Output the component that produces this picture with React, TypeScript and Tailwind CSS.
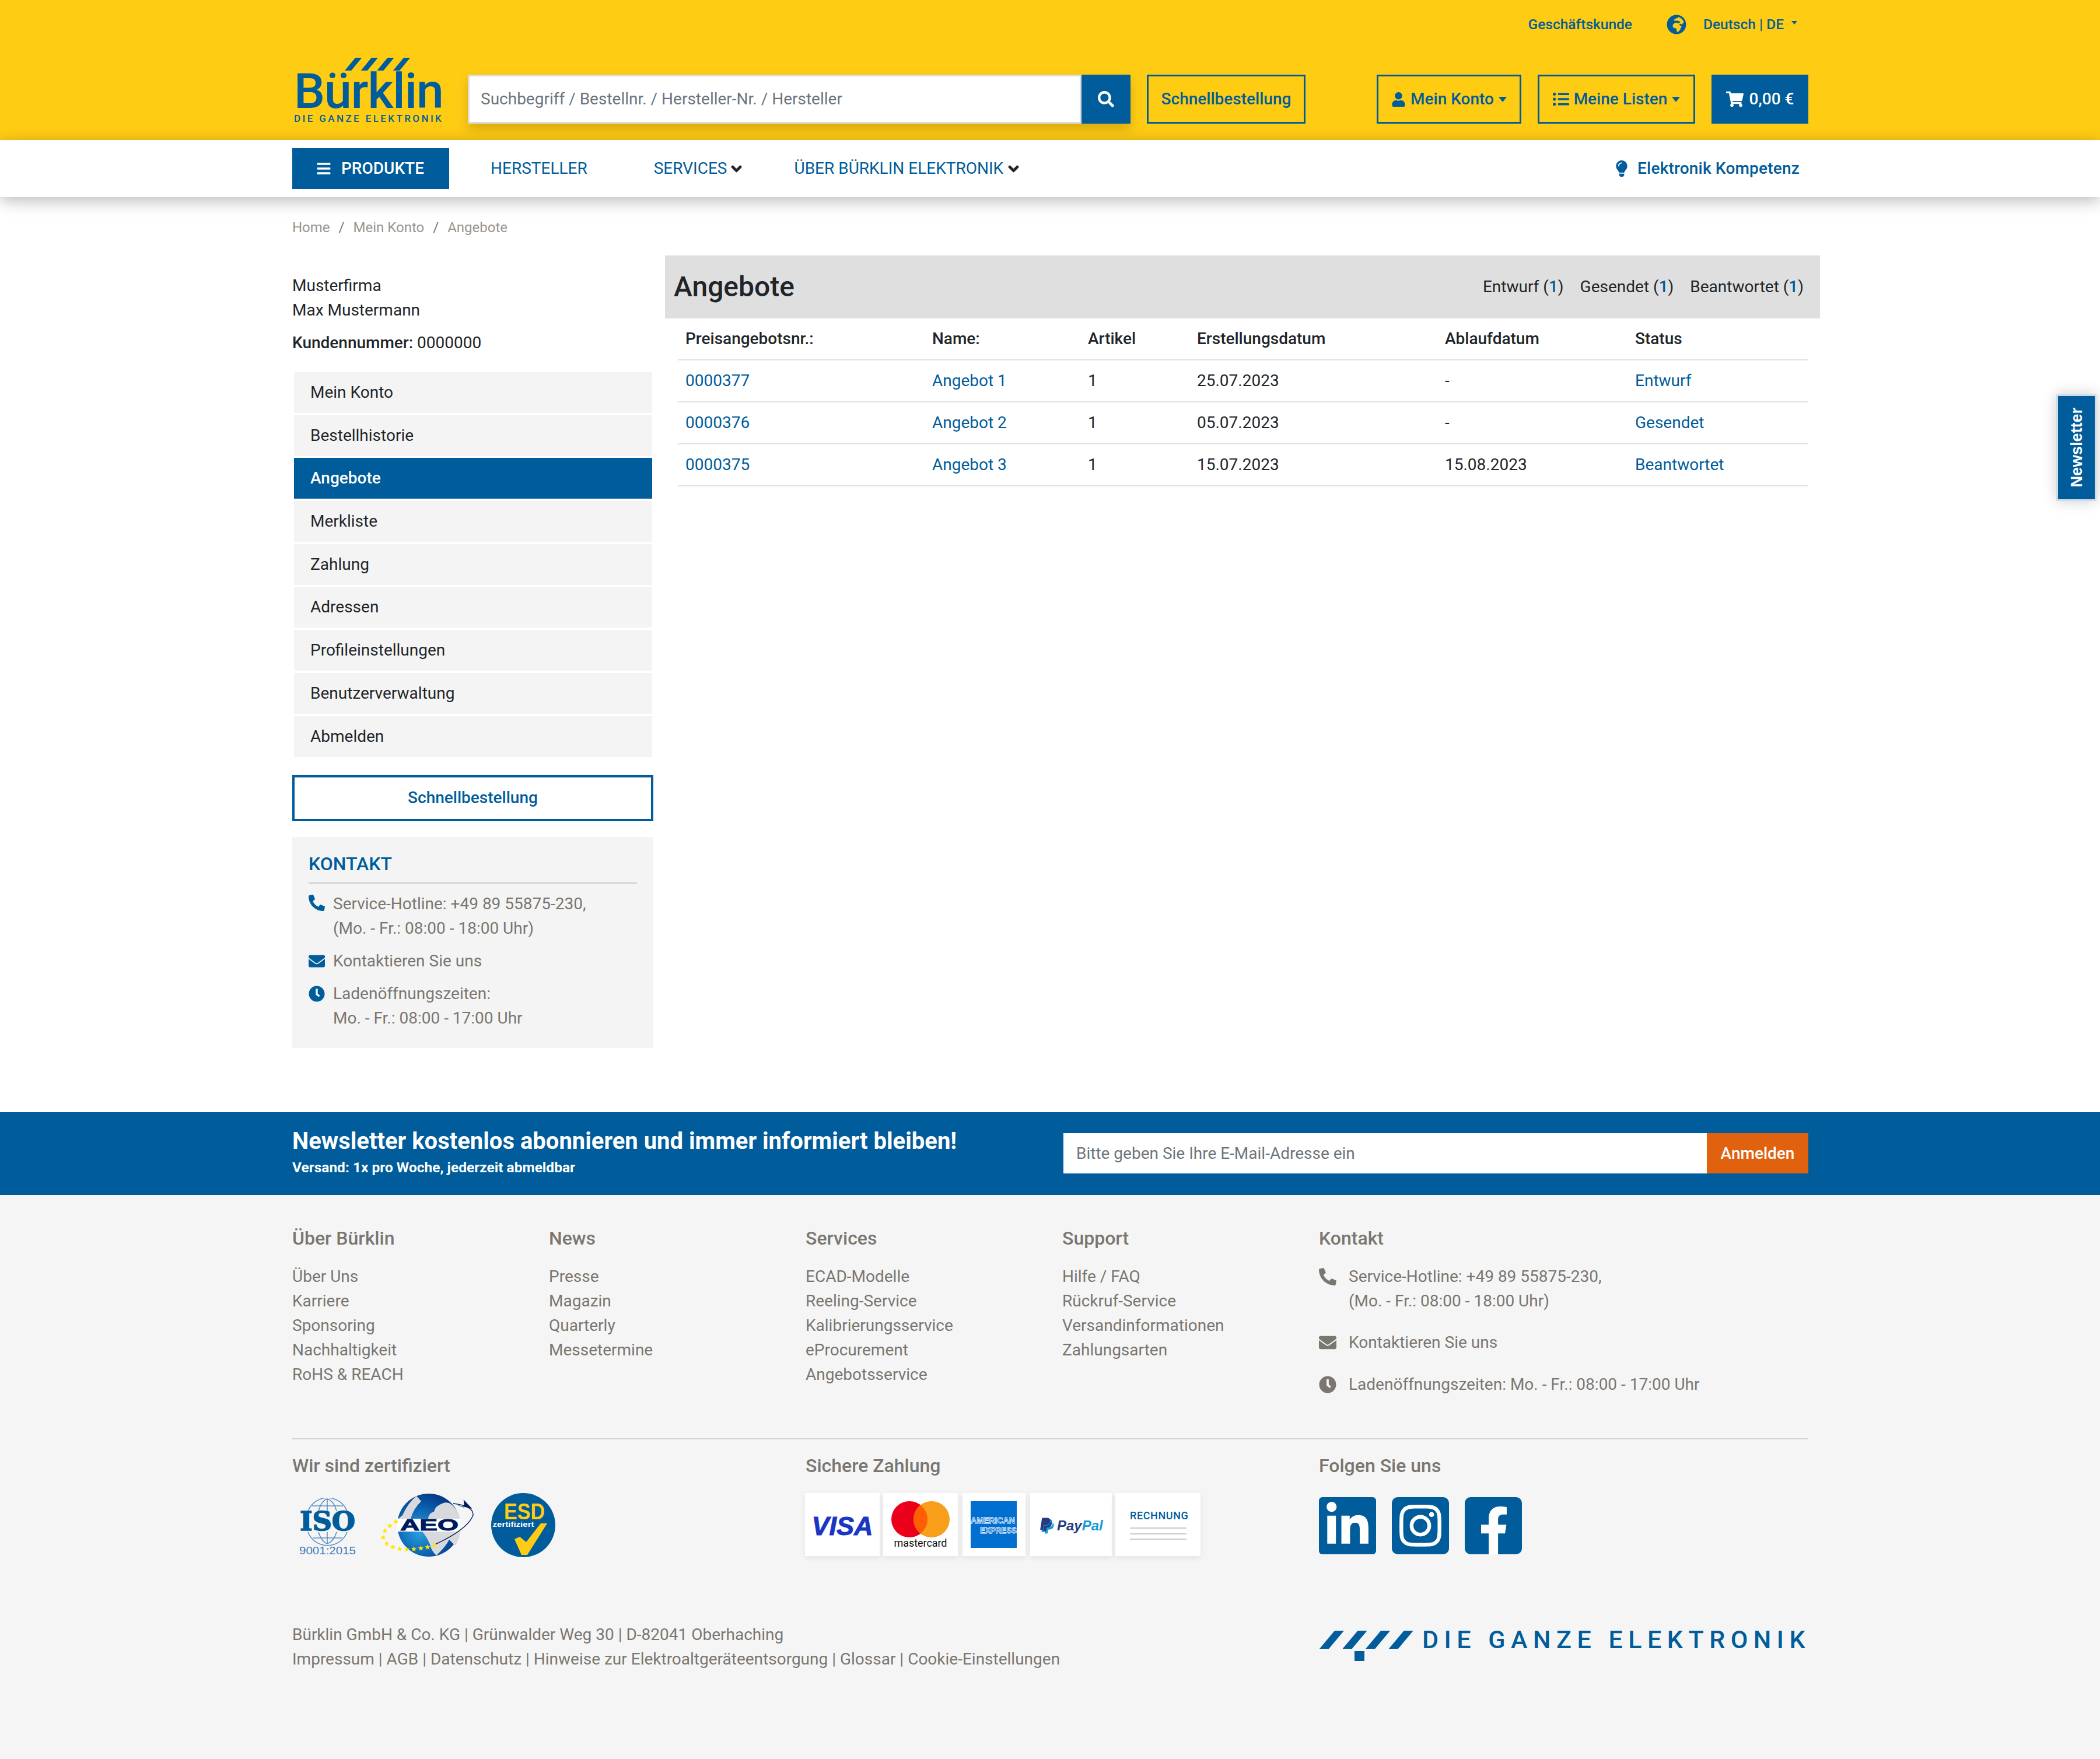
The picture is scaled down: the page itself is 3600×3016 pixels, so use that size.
import React from 'react';
import {
  FaBars,
  FaChevronDown,
  FaClock,
  FaEnvelope,
  FaFacebookF,
  FaGlobeAfrica,
  FaInstagram,
  FaLightbulb,
  FaLinkedinIn,
  FaListUl,
  FaPaypal,
  FaPhoneAlt,
  FaSearch,
  FaShoppingCart,
  FaUser,
} from 'react-icons/fa';

const Caret: React.FC = () => (
  <span className="inline-block w-0 h-0 border-x-[7px] border-x-transparent border-t-[9px] border-t-[#005c9a]" />
);

const Stripes: React.FC<{ className: string; big?: boolean }> = ({ className, big }) => (
  <svg viewBox="0 0 162 52" preserveAspectRatio="none" className={className} fill="#005c9a">
    {[0, 1, 2, 3].map((i) => {
      const x = i * 39.6;
      const h = big ? 31 : 52;
      return <polygon key={i} points={`${x + 26},0 ${x + 42},0 ${x + 16},${h} ${x},${h}`} />;
    })}
    {big && <rect x="60" y="35" width="17" height="17" />}
  </svg>
);

const Header: React.FC = () => (
  <header className="bg-[#ffcc14] h-[240px]">
    <div className="w-[2599px] ml-[501px]">
      <div className="h-[84px] flex items-center justify-end pr-[19px] text-[24.5px] font-medium text-[#005c9a]">
        <span>Geschäftskunde</span>
        <FaGlobeAfrica size={34} className="ml-[59px]" />
        <span className="ml-[29px]">Deutsch | DE</span>
        <span className="ml-[13px] mb-[6px] inline-block w-0 h-0 border-x-[5px] border-x-transparent border-t-[6px] border-t-[#005c9a]" />
      </div>
      <div className="mt-[44px] h-[84px] flex">
        <div className="w-[301px] -mt-[29px] pl-[3px] text-[#005c9a]">
          <Stripes className="ml-[87px] w-[113px] h-[22px]" />
          <div className="mt-[6px] h-[59px] leading-[59px] text-[84px] font-medium tracking-[-1px]">Bürklin</div>
          <div className="mt-[11px] leading-[13px] text-[17px] font-medium tracking-[3.4px] whitespace-nowrap">DIE GANZE ELEKTRONIK</div>
        </div>
        <div className="flex w-[1136px] shadow-[0_10px_18px_rgba(0,0,0,0.16)]">
          <input
            className="flex-1 bg-white border-[3px] border-[#dcdcdc] pl-[19px] text-[28px] outline-none placeholder:text-[#6c757d]"
            placeholder="Suchbegriff / Bestellnr. / Hersteller-Nr. / Hersteller"
          />
          <button className="w-[84px] bg-[#005c9a] flex items-center justify-center text-white">
            <FaSearch size={28} />
          </button>
        </div>
        <button className="ml-[28px] w-[272px] border-[3px] border-[#005c9a] text-[28px] font-medium text-[#005c9a]">
          Schnellbestellung
        </button>
        <button className="ml-[122px] w-[248px] border-[3px] border-[#005c9a] text-[28px] font-medium text-[#005c9a] flex items-center justify-center gap-[8px]">
          <FaUser size={25} />
          <span>Mein Konto</span>
          <Caret />
        </button>
        <button className="ml-[28px] w-[270px] border-[3px] border-[#005c9a] text-[28px] font-medium text-[#005c9a] flex items-center justify-center gap-[8px]">
          <FaListUl size={28} />
          <span>Meine Listen</span>
          <Caret />
        </button>
        <button className="ml-[28px] w-[166px] bg-[#005c9a] text-[28px] font-medium text-white flex items-center justify-center gap-[10px]">
          <FaShoppingCart size={30} />
          <span>0,00 €</span>
        </button>
      </div>
    </div>
  </header>
);

const Nav: React.FC = () => (
  <nav className="relative h-[98px] bg-white shadow-[0_6px_26px_rgba(0,0,0,0.28)]">
    <div className="w-[2599px] ml-[501px] h-full flex items-center text-[28px] text-[#005c9a]">
      <div className="w-[269px] h-[70px] bg-[#005c9a] text-white font-medium flex items-center pl-[41px] gap-[17px]">
        <FaBars size={26} />
        <span>PRODUKTE</span>
      </div>
      <span className="ml-[71px]">HERSTELLER</span>
      <span className="ml-[114px]">SERVICES</span>
      <FaChevronDown size={19} className="ml-[7px] text-[#212529] [stroke-width:50]" />
      <span className="ml-[89px]">ÜBER BÜRKLIN ELEKTRONIK</span>
      <FaChevronDown size={19} className="ml-[8px] text-[#212529] [stroke-width:50]" />
      <div className="ml-auto pr-[15px] flex items-center gap-[13px] font-medium tracking-[0.2px]">
        <FaLightbulb size={28} />
        <span>Elektronik Kompetenz</span>
      </div>
    </div>
  </nav>
);

const sideItems = [
  'Mein Konto',
  'Bestellhistorie',
  'Angebote',
  'Merkliste',
  'Zahlung',
  'Adressen',
  'Profileinstellungen',
  'Benutzerverwaltung',
  'Abmelden',
];

const Sidebar: React.FC = () => (
  <aside className="w-[619px] shrink-0 pt-[31px] text-[#212529]">
    <div>Musterfirma</div>
    <div>Max Mustermann</div>
    <div className="mt-[14px]">
      <span className="font-medium">Kundennummer:</span> 0000000
    </div>
    <div className="mt-[29px] ml-[3px] w-[614px] flex flex-col gap-[3.7px]">
      {sideItems.map((item) =>
        item === 'Angebote' ? (
          <div key={item} className="h-[70px] flex items-center pl-[28px] bg-[#005c9a] text-white font-medium">
            {item}
          </div>
        ) : (
          <div key={item} className="h-[70px] flex items-center pl-[28px] bg-[#f4f4f4]">
            {item}
          </div>
        ),
      )}
    </div>
    <button className="mt-[31px] w-full h-[79px] border-[4px] border-[#005c9a] font-medium text-[#005c9a]">
      Schnellbestellung
    </button>
    <div className="mt-[27px] h-[362px] bg-[#f4f4f4] px-[28px] pt-[25px] text-[#7a7670]">
      <div className="text-[32px] font-medium text-[#005c9a] border-b-2 border-[#cccccc] pb-[11px]">KONTAKT</div>
      <div className="mt-[14px] flex">
        <FaPhoneAlt size={28} className="mt-[5px] w-[42px] pr-[14px] text-[#005c9a] shrink-0" />
        <div>
          Service-Hotline: +49 89 55875-230,
          <br />
          (Mo. - Fr.: 08:00 - 18:00 Uhr)
        </div>
      </div>
      <div className="mt-[14px] flex items-center">
        <FaEnvelope size={28} className="w-[42px] pr-[14px] text-[#005c9a] shrink-0" />
        <div>Kontaktieren Sie uns</div>
      </div>
      <div className="mt-[14px] flex">
        <FaClock size={28} className="mt-[7px] w-[42px] pr-[14px] text-[#005c9a] shrink-0" />
        <div>
          Ladenöffnungszeiten:
          <br />
          Mo. - Fr.: 08:00 - 17:00 Uhr
        </div>
      </div>
    </div>
  </aside>
);

const offers = [
  { nr: '0000377', name: 'Angebot 1', created: '25.07.2023', expires: '-', status: 'Entwurf' },
  { nr: '0000376', name: 'Angebot 2', created: '05.07.2023', expires: '-', status: 'Gesendet' },
  { nr: '0000375', name: 'Angebot 3', created: '15.07.2023', expires: '15.08.2023', status: 'Beantwortet' },
];

const MainPanel: React.FC = () => (
  <section className="flex-1 min-w-0 -mr-[20px] text-[#212529]">
    <div className="h-[108px] bg-[#dfdfdf] flex items-center justify-between pl-[15px] pr-[28px]">
      <h1 className="text-[48px] font-medium">Angebote</h1>
      <div className="flex gap-[28px]">
        {['Entwurf', 'Gesendet', 'Beantwortet'].map((s) => (
          <span key={s}>
            {s} (<span className="font-medium text-[#005c9a]">1</span>)
          </span>
        ))}
      </div>
    </div>
    <table className="ml-[22px] w-[1938px] table-fixed border-separate border-spacing-0 text-left">
      <thead>
        <tr className="font-medium">
          <th className="w-[436px] h-[72px] pl-[13px] font-medium border-b-2 border-[#dee2e6]">Preisangebotsnr.:</th>
          <th className="w-[267px] font-medium border-b-2 border-[#dee2e6]">Name:</th>
          <th className="w-[187px] font-medium border-b-2 border-[#dee2e6]">Artikel</th>
          <th className="w-[425px] font-medium border-b-2 border-[#dee2e6]">Erstellungsdatum</th>
          <th className="w-[326px] font-medium border-b-2 border-[#dee2e6]">Ablaufdatum</th>
          <th className="font-medium border-b-2 border-[#dee2e6]">Status</th>
        </tr>
      </thead>
      <tbody>
        {offers.map((o) => (
          <tr key={o.nr}>
            <td className="h-[72px] pl-[13px] border-b-2 border-[#dee2e6] text-[#005c9a]">{o.nr}</td>
            <td className="border-b-2 border-[#dee2e6] text-[#005c9a]">{o.name}</td>
            <td className="border-b-2 border-[#dee2e6]">1</td>
            <td className="border-b-2 border-[#dee2e6]">{o.created}</td>
            <td className="border-b-2 border-[#dee2e6]">{o.expires}</td>
            <td className="border-b-2 border-[#dee2e6] text-[#005c9a]">{o.status}</td>
          </tr>
        ))}
      </tbody>
    </table>
  </section>
);

const NewsletterBand: React.FC = () => (
  <div className="bg-[#005c9a] h-[142px]">
    <div className="w-[2599px] ml-[501px] h-full flex justify-between text-white">
      <div className="pt-[26px]">
        <div className="text-[40px] leading-[48px] font-bold">Newsletter kostenlos abonnieren und immer informiert bleiben!</div>
        <div className="mt-[5px] text-[24.5px] leading-[32px] font-bold">Versand: 1x pro Woche, jederzeit abmeldbar</div>
      </div>
      <div className="flex self-center w-[1277px] h-[69px]">
        <input
          className="flex-1 bg-white pl-[22px] text-[28px] text-[#212529] outline-none placeholder:text-[#6c757d]"
          placeholder="Bitte geben Sie Ihre E-Mail-Adresse ein"
        />
        <button className="w-[174px] bg-[#e0610e] text-[28px] font-medium text-white">Anmelden</button>
      </div>
    </div>
  </div>
);

const footerCols = [
  { title: 'Über Bürklin', links: ['Über Uns', 'Karriere', 'Sponsoring', 'Nachhaltigkeit', 'RoHS & REACH'] },
  { title: 'News', links: ['Presse', 'Magazin', 'Quarterly', 'Messetermine'] },
  { title: 'Services', links: ['ECAD-Modelle', 'Reeling-Service', 'Kalibrierungsservice', 'eProcurement', 'Angebotsservice'] },
  { title: 'Support', links: ['Hilfe / FAQ', 'Rückruf-Service', 'Versandinformationen', 'Zahlungsarten'] },
];

const IsoLogo: React.FC = () => (
  <svg viewBox="0 0 97 101" className="w-[97px] h-[101px] mt-[9px] ml-[12px]">
    <g fill="none" stroke="#5b8fc0" strokeWidth="1.6">
      <path d="M15 22 A36 36 0 0 1 82 22" />
      <path d="M33 22 Q38 4 48 1 Q59 4 64 22" />
      <path d="M48 1 V22 M22 13 H75" />
      <path d="M15 58 A36 36 0 0 0 82 58" />
      <path d="M33 58 Q38 74 48 78 Q59 74 64 58" />
      <path d="M48 58 V78 M24 68 H73" />
    </g>
    <text x="48.5" y="55" textAnchor="middle" fontFamily="'DejaVu Serif', serif" fontWeight="900" fontSize="44" textLength="95" lengthAdjust="spacingAndGlyphs" fill="#005c9a" stroke="#005c9a" strokeWidth="1.6">
      ISO
    </text>
    <text x="48.5" y="96" textAnchor="middle" fontFamily="'Liberation Sans', sans-serif" fontSize="19" textLength="97" lengthAdjust="spacingAndGlyphs" fill="#3f7db5">
      9001:2015
    </text>
  </svg>
);

const aeoStars = [
  [26.7, 49.3], [16.4, 56.3], [7.9, 64.7], [4.8, 76.3], [11, 86.7], [21.3, 92.7],
  [32.9, 95.7], [45.4, 96.7], [57.5, 96], [69.5, 94.7], [81, 92.7], [93.2, 89.3],
];

const starPoints = (cx: number, cy: number, r: number) =>
  Array.from({ length: 10 }, (_, i) => {
    const a = (Math.PI / 5) * i - Math.PI / 2;
    const rr = i % 2 === 0 ? r : r * 0.42;
    return `${cx + rr * Math.cos(a)},${cy + rr * Math.sin(a)}`;
  }).join(' ');

const AeoLogo: React.FC = () => (
  <svg viewBox="0 0 160 110" className="w-[160px] h-[110px] ml-[42px]">
    <defs>
      <radialGradient id="aeoGlobe" cx="0.35" cy="0.6" r="0.75">
        <stop offset="0" stopColor="#2aa3e0" />
        <stop offset="0.55" stopColor="#0a5ba8" />
        <stop offset="1" stopColor="#04287a" />
      </radialGradient>
    </defs>
    <circle cx="83" cy="55" r="54" fill="url(#aeoGlobe)" />
    <path fill="#d8d9dc" d="M62 5 Q48 16 38 38 L31 44 H52 Q56 28 70 14 Z" />
    <path fill="#d8d9dc" d="M82 44 Q83 34 92 32 Q94 22 106 18 Q118 12 128 26 Q135 34 137 44 Z" />
    <path fill="#d8d9dc" d="M72 66 H137 Q136 80 128 90 L118 80 Q112 92 96 107 Q88 100 85 88 Q80 76 72 66 Z" />
    <rect x="29" y="44" width="108" height="22" fill="#ffffff" />
    <text x="84" y="64" textAnchor="middle" fontFamily="'Liberation Sans', sans-serif" fontWeight="700" fontSize="27" textLength="100" lengthAdjust="spacingAndGlyphs" stroke="#001a5e" strokeWidth="1" fill="#001a5e">
      AEO
    </text>
    <path d="M94 88 Q150 62 159 38 Q160 22 125 18" fill="none" stroke="#001a5e" strokeWidth="1.4" />
    <polygon points="157.5,27 142.7,11.3 144,25 130,20" fill="#001a5e" />
    {aeoStars.map(([x, y]) => (
      <polygon key={`${x}-${y}`} points={starPoints(x, y, 5)} fill="#ffe600" />
    ))}
  </svg>
);

const EsdLogo: React.FC = () => (
  <svg viewBox="0 0 110 110" className="w-[110px] h-[110px] ml-[30px]">
    <circle cx="55" cy="55" r="55" fill="#005c9a" />
    <text x="57" y="45" textAnchor="middle" fontFamily="'Liberation Sans', sans-serif" fontWeight="700" fontSize="39" textLength="70" lengthAdjust="spacingAndGlyphs" fill="#ffcc14">
      ESD
    </text>
    <text x="38" y="58" textAnchor="middle" fontFamily="'Liberation Sans', sans-serif" fontWeight="700" fontSize="13" textLength="71" lengthAdjust="spacingAndGlyphs" fill="#ffffff">
      zertifiziert
    </text>
    <polygon points="40,79 49,75 60,84 85,52 96,52 62,106 52,106" fill="#ffcc14" />
  </svg>
);

const PayCard: React.FC<{ className: string; children: React.ReactNode }> = ({ className, children }) => (
  <div className={`${className} h-[108px] bg-white shadow-[0_3px_10px_rgba(0,0,0,0.08)] relative`}>{children}</div>
);

const Payments: React.FC = () => (
  <div className="flex">
    <PayCard className="w-[128px] flex items-center justify-center pt-[5px]">
      <span className="font-[family-name:'Liberation_Sans',sans-serif] font-bold italic text-[45px] leading-none text-[#1a36c4] [-webkit-text-stroke:1px_#1a36c4]">VISA</span>
    </PayCard>
    <PayCard className="ml-[6px] w-[128px]">
      <svg viewBox="0 0 128 108" className="w-full h-full">
        <circle cx="45" cy="45" r="31" fill="#eb001b" />
        <circle cx="83" cy="45" r="31" fill="#f79e1b" />
        <path d="M64 20.5 A31 31 0 0 1 64 69.5 A31 31 0 0 1 64 20.5 Z" fill="#ff5f00" />
        <text x="64" y="92" textAnchor="middle" fontFamily="Roboto, sans-serif" fontSize="18" textLength="91" fill="#111111">
          mastercard
        </text>
      </svg>
    </PayCard>
    <PayCard className="ml-[8px] w-[108px]">
      <svg viewBox="0 0 108 108" className="w-full h-full">
        <rect x="14" y="14" width="79" height="80" fill="#016fd0" />
        <text x="14" y="52" fontFamily="'Liberation Sans', sans-serif" fontWeight="700" fontSize="15" textLength="76" lengthAdjust="spacingAndGlyphs" fill="#016fd0" stroke="#ffffff" strokeWidth="0.8">
          AMERICAN
        </text>
        <text x="30" y="69" fontFamily="'Liberation Sans', sans-serif" fontWeight="700" fontSize="15" textLength="63" lengthAdjust="spacingAndGlyphs" fill="#016fd0" stroke="#ffffff" strokeWidth="0.8">
          EXPRESS
        </text>
      </svg>
    </PayCard>
    <PayCard className="ml-[8px] w-[140px] flex items-center pl-[14px] pt-[4px]">
      <span className="relative w-[26px] h-[30px] block">
        <FaPaypal size={28} className="absolute left-[2px] top-[2px] text-[#179bd7]" />
        <FaPaypal size={26} className="absolute left-0 top-0 text-[#253b80]" />
      </span>
      <span className="ml-[6px] font-[family-name:'Liberation_Sans',sans-serif] font-bold italic text-[24px] leading-[30px]">
        <span className="text-[#253b80]">Pay</span>
        <span className="text-[#179bd7]">Pal</span>
      </span>
    </PayCard>
    <PayCard className="ml-[6px] w-[146px] pl-[25px] pt-[28px]">
      <div className="text-[18px] leading-[22px] font-medium tracking-[0.6px] text-[#005c9a]">RECHNUNG</div>
      <div className="mt-[9px] w-[97px] h-[2px] bg-[#cccccc]" />
      <div className="mt-[8px] w-[97px] h-[2px] bg-[#cccccc]" />
      <div className="mt-[7px] w-[97px] h-[2px] bg-[#cccccc]" />
    </PayCard>
  </div>
);

const Footer: React.FC = () => (
  <footer className="bg-[#f5f5f5] text-[#7a7670] pb-[154px]">
    <div className="w-[2599px] ml-[501px] pt-[53px]">
      <div className="grid grid-cols-[440px_440px_440px_440px_1fr]">
        {footerCols.map((col) => (
          <div key={col.title}>
            <h3 className="text-[32px] font-medium">{col.title}</h3>
            <ul className="mt-[24px]">
              {col.links.map((l) => (
                <li key={l}>{l}</li>
              ))}
            </ul>
          </div>
        ))}
        <div>
          <h3 className="text-[32px] font-medium">Kontakt</h3>
          <div className="mt-[24px] flex">
            <FaPhoneAlt size={30} className="mt-[6px] w-[51px] pr-[21px] shrink-0" />
            <div>
              Service-Hotline: +49 89 55875-230,
              <br />
              (Mo. - Fr.: 08:00 - 18:00 Uhr)
            </div>
          </div>
          <div className="mt-[29px] flex items-center">
            <FaEnvelope size={30} className="w-[51px] pr-[21px] shrink-0" />
            <div>Kontaktieren Sie uns</div>
          </div>
          <div className="mt-[30px] flex items-center">
            <FaClock size={30} className="w-[51px] pr-[21px] shrink-0" />
            <div>Ladenöffnungszeiten: Mo. - Fr.: 08:00 - 17:00 Uhr</div>
          </div>
        </div>
      </div>

      <div className="mt-[71px] border-t-2 border-[#d5d5d5]" />

      <div className="mt-[24px] grid grid-cols-[880px_880px_1fr]">
        <div>
          <h3 className="text-[32px] font-medium">Wir sind zertifiziert</h3>
          <div className="mt-[26px] flex h-[110px]">
            <IsoLogo />
            <AeoLogo />
            <EsdLogo />
          </div>
        </div>
        <div>
          <h3 className="text-[32px] font-medium">Sichere Zahlung</h3>
          <div className="mt-[26px] -ml-[1px]">
            <Payments />
          </div>
        </div>
        <div>
          <h3 className="text-[32px] font-medium">Folgen Sie uns</h3>
          <div className="mt-[33px] flex gap-[27px] text-white">
            <div className="w-[98px] h-[98px] bg-[#005c9a] rounded-[6px] flex items-center justify-center">
              <FaLinkedinIn size={82} />
            </div>
            <div className="w-[98px] h-[98px] bg-[#005c9a] rounded-[10px] flex items-center justify-center">
              <FaInstagram size={82} />
            </div>
            <div className="w-[98px] h-[98px] bg-[#005c9a] rounded-[10px] flex items-end justify-center pl-[2px]">
              <FaFacebookF size={82} />
            </div>
          </div>
        </div>
      </div>

      <div className="mt-[112px] flex justify-between">
        <div>
          <div>Bürklin GmbH &amp; Co. KG | Grünwalder Weg 30 | D-82041 Oberhaching</div>
          <div>Impressum | AGB | Datenschutz | Hinweise zur Elektroaltgeräteentsorgung | Glossar | Cookie-Einstellungen</div>
        </div>
        <div className="w-[839px] flex mt-[14px] text-[#005c9a]">
          <Stripes big className="w-[162px] h-[52px] shrink-0 ml-[1px]" />
          <span className="ml-[14px] text-[43px] leading-[31px] h-[31px] font-medium tracking-[9.5px] whitespace-nowrap">DIE GANZE ELEKTRONIK</span>
        </div>
      </div>
    </div>
  </footer>
);

const NewsletterTab: React.FC = () => (
  <div className="absolute right-[6px] top-[676px] w-[69px] h-[183px] bg-[#005c9a] border-[3px] border-[#cfdce8] shadow-[0_0_24px_rgba(0,0,0,0.2)] flex items-center justify-center">
    <span className="[writing-mode:vertical-rl] rotate-180 font-[family-name:'Liberation_Sans',sans-serif] font-bold text-[27px] text-white">
      Newsletter
    </span>
  </div>
);

export default function App() {
  return (
    <div className="relative font-[family-name:Roboto,sans-serif] text-[28px] leading-[42px] bg-white">
      <Header />
      <Nav />
      <NewsletterTab />
      <main className="w-[2599px] ml-[501px] pt-[31px] pb-[110px]">
        <div className="text-[24px] text-[#9a958f] flex gap-[15px]">
          <span>Home</span>
          <span className="text-[#7a7670]">/</span>
          <span>Mein Konto</span>
          <span className="text-[#7a7670]">/</span>
          <span>Angebote</span>
        </div>
        <div className="mt-[27px] flex gap-[20px]">
          <Sidebar />
          <MainPanel />
        </div>
      </main>
      <NewsletterBand />
      <Footer />
    </div>
  );
}
